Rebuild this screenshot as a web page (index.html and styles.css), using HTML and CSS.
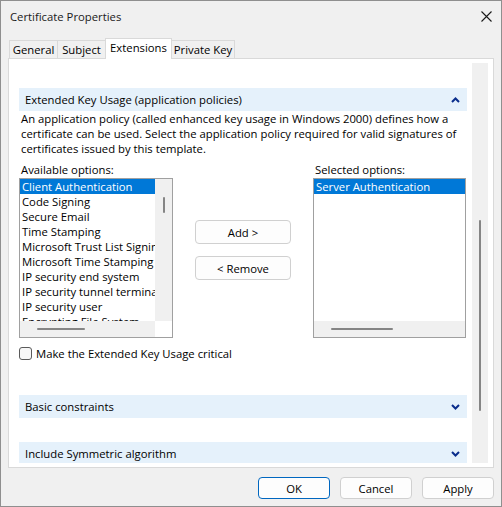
FILE: index.html
```html
<!DOCTYPE html>
<html>
<head>
<meta charset="utf-8">
<title>Certificate Properties</title>
<link rel="stylesheet" href="styles.css">
</head>
<body>
<div class="window">
  <div class="titlebar">
    <span class="title">Certificate Properties</span>
    <svg class="close" width="11" height="11" viewBox="0 0 11 11"><path d="M0.5 0.5 L10.5 10.5 M10.5 0.5 L0.5 10.5" stroke="#1a1a1a" stroke-width="1.1" fill="none"/></svg>
  </div>
  <div class="tabs">
    <div class="tab t-general">General</div>
    <div class="tab t-subject">Subject</div>
    <div class="tab t-ext active">Extensions</div>
    <div class="tab t-key">Private Key</div>
  </div>
  <div class="panel">
    <div class="content">
      <div class="section-head">
        <span>Extended Key Usage (application policies)</span>
        <svg class="chev" width="9" height="6" viewBox="0 0 9 6"><path d="M1 5 L4.5 1.5 L8 5" stroke="#0a2d8c" stroke-width="2" fill="none"/></svg>
      </div>
      <p class="desc">An application policy (called enhanced key usage in Windows 2000) defines how a<br>certificate can be used. Select the application policy required for valid signatures of<br>certificates issued by this template.</p>
      <div class="lists">
        <div class="col col-left">
          <div class="label">Available options:</div>
          <div class="listbox lb-left">
            <div class="items">
              <div class="item sel">Client Authentication</div>
              <div class="item">Code Signing</div>
              <div class="item">Secure Email</div>
              <div class="item">Time Stamping</div>
              <div class="item">Microsoft Trust List Signing</div>
              <div class="item">Microsoft Time Stamping</div>
              <div class="item">IP security end system</div>
              <div class="item">IP security tunnel termination</div>
              <div class="item">IP security user</div>
              <div class="item">Encrypting File System</div>
            </div>
            <div class="vscroll"><div class="vthumb"></div></div>
            <div class="hscroll"><div class="hthumb hthumb-left"></div></div>
            <div class="corner"></div>
          </div>
        </div>
        <div class="mid-buttons">
          <button class="btn btn-mid">Add &gt;</button>
          <button class="btn btn-mid">&lt; Remove</button>
        </div>
        <div class="col col-right">
          <div class="label">Selected options:</div>
          <div class="listbox lb-right">
            <div class="items">
              <div class="item sel">Server Authentication</div>
            </div>
            <div class="hscroll"><div class="hthumb hthumb-right"></div></div>
          </div>
        </div>
      </div>
      <label class="check">
        <span class="box"></span>
        <span>Make the Extended Key Usage critical</span>
      </label>
      <div class="section-head sh-basic">
        <span>Basic constraints</span>
        <svg class="chev" width="9" height="6" viewBox="0 0 9 6"><path d="M1 1 L4.5 4.5 L8 1" stroke="#0a2d8c" stroke-width="2" fill="none"/></svg>
      </div>
      <div class="section-head sh-sym">
        <span>Include Symmetric algorithm</span>
        <svg class="chev" width="9" height="6" viewBox="0 0 9 6"><path d="M1 1 L4.5 4.5 L8 1" stroke="#0a2d8c" stroke-width="2" fill="none"/></svg>
      </div>
    </div>
    <div class="track"><div class="track-thumb"></div></div>
  </div>
  <div class="footer">
    <button class="btn btn-foot btn-default">OK</button>
    <button class="btn btn-foot">Cancel</button>
    <button class="btn btn-foot">Apply</button>
  </div>
</div>
</body>
</html>
```
FILE: styles.css
```css
* { box-sizing: border-box; }
html, body { margin: 0; padding: 0; }
body {
  width: 502px;
  height: 507px;
  overflow: hidden;
  background: #f0f0f0;
  font-family: "Segoe UI", "Open Sans", sans-serif;
  font-size: 11.3px;
  color: #000;
}
.window {
  width: 502px;
  height: 507px;
  border: 1px solid #8f8f8f;
  background: #f0f0f0;
  display: flex;
  flex-direction: column;
}
.titlebar {
  height: 30px;
  flex: none;
  display: flex;
  align-items: center;
  justify-content: space-between;
  padding: 0 9px 0 9px;
  color: #1a1a1a;
}
.close { display: block; }
.tabs {
  flex: none;
  height: 20px;
  margin-top: 7px;
  padding-left: 8px;
  display: flex;
  align-items: flex-end;
  position: relative;
  z-index: 1;
}
.tab {
  height: 18px;
  border: 1px solid #d9d9d9;
  border-bottom: none;
  background: #f0f0f0;
  text-align: center;
  line-height: 15px;
  padding-top: 1px;
  margin-left: -1px;
  white-space: nowrap;
}
.tab.t-general { margin-left: 0; width: 49px; }
.tab.t-subject { width: 49px; }
.tab.t-ext { width: 67px; }
.tab.t-key { width: 64px; }
.tab.active {
  height: 21px;
  background: #fff;
  margin-bottom: -1px;
}
.panel {
  flex: none;
  margin-left: 7px;
  width: 486px;
  height: 410px;
  border: 1px solid #d9d9d9;
  background: #fff;
  padding: 4px 5px 4px 0;
  display: flex;
}
.content {
  flex: 1;
  min-width: 0;
  overflow: hidden;
  padding: 25px 5px 0 10px;
}
.track {
  width: 16px;
  flex: none;
  background: #f0f0f0;
  padding: 157px 0 0 7px;
}
.track-thumb {
  width: 2px;
  height: 191px;
  background: #858585;
  border-radius: 1px;
}
.section-head {
  height: 23px;
  background: #e5f1fb;
  display: flex;
  align-items: center;
  justify-content: space-between;
  padding: 0 7px 0 6px;
  white-space: nowrap;
}
.chev { display: block; }
.desc {
  margin: 0;
  padding-left: 2px;
  line-height: 15px;
  white-space: nowrap;
}
.lists {
  display: flex;
  margin-top: 6px;
}
.col-left { width: 154px; margin-right: 22px; }
.col-right { width: 153px; margin-left: 22px; }
.label {
  line-height: 15px;
  padding-left: 2px;
  margin-bottom: 1px;
  white-space: nowrap;
}
.listbox {
  height: 160px;
  border: 1px solid #a0a0a0;
  display: grid;
  grid-template-rows: 1fr 16px;
  overflow: hidden;
}
.lb-left { grid-template-columns: 1fr 17px; }
.lb-right { grid-template-columns: 1fr; }
.items {
  overflow: hidden;
  min-width: 0;
}
.item {
  height: 15px;
  line-height: 15px;
  padding-left: 2px;
  white-space: nowrap;
}
.item.sel {
  background: #0078d7;
  color: #fff;
}
.vscroll {
  background: #f0f0f0;
  padding: 18px 0 0 8px;
}
.vthumb {
  width: 2px;
  height: 16px;
  background: #858585;
  border-radius: 1px;
}
.hscroll {
  background: #f0f0f0;
  padding: 7px 0 0 17px;
}
.hthumb {
  height: 2px;
  background: #858585;
  border-radius: 1px;
}
.hthumb-left { width: 48px; }
.hthumb-right { width: 62px; }
.corner { background: #fff; }
.mid-buttons {
  width: 96px;
  padding-top: 58px;
  display: flex;
  flex-direction: column;
  gap: 12px;
}
.btn {
  font-family: inherit;
  font-size: inherit;
  color: #000;
  background: #fdfdfd;
  border: 1px solid #d0d0d0;
  border-radius: 4px;
  padding: 0;
  margin: 0;
}
.btn-mid { height: 24px; width: 96px; }
.check {
  display: flex;
  align-items: center;
  margin-top: 8px;
  line-height: 15px;
  white-space: nowrap;
}
.box {
  width: 13px;
  height: 13px;
  border: 1px solid #5a5a5a;
  border-radius: 3px;
  background: #f7f7f7;
  margin-right: 4px;
  flex: none;
}
.sh-basic { margin-top: 34px; }
.sh-sym { margin-top: 24px; }
.footer {
  flex: none;
  display: flex;
  justify-content: flex-end;
  gap: 10px;
  padding: 9px 7px 0 0;
}
.btn-foot { width: 72px; height: 22px; }
.btn-default { border-color: #0067c0; }
```
